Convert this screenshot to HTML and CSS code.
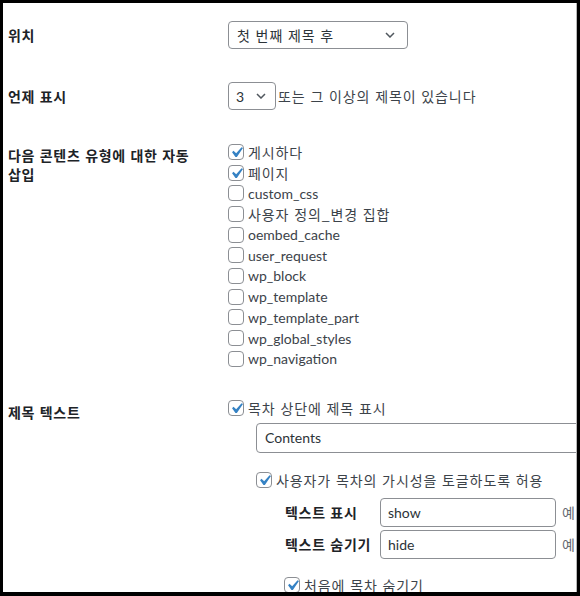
FILE: index.html
```html
<!DOCTYPE html>
<html lang="ko">
<head>
<meta charset="utf-8">
<link rel="stylesheet" href="styles.css">
</head>
<body>
<div class="frame">
  <div class="row row-pos">
    <div class="th th-mid">위치</div>
    <div class="td">
      <div class="select sel-wide"><span>첫 번째 제목 후</span><svg class="chev" viewBox="0 0 10 6" width="10" height="6"><path d="M1 1l4 4 4-4" fill="none" stroke="#50575e" stroke-width="1.5"/></svg></div>
    </div>
  </div>

  <div class="row row-when">
    <div class="th th-mid">언제 표시</div>
    <div class="td inline">
      <div class="select sel-num"><span class="en">3</span><svg class="chev" viewBox="0 0 10 6" width="10" height="6"><path d="M1 1l4 4 4-4" fill="none" stroke="#50575e" stroke-width="1.5"/></svg></div>
      <span class="after">또는 그 이상의 제목이 있습니다</span>
    </div>
  </div>

  <div class="row row-types">
    <div class="th th-top">다음 콘텐츠 유형에 대한 자동 삽입</div>
    <div class="td list">
      <div class="cb-line"><span class="cb on"><svg viewBox="0 0 20 20"><path d="M14.83 4.89l1.34.94-5.81 8.38H9.02L5.78 9.67l1.34-1.25 2.57 2.4z"/></svg></span>게시하다</div>
      <div class="cb-line"><span class="cb on"><svg viewBox="0 0 20 20"><path d="M14.83 4.89l1.34.94-5.81 8.38H9.02L5.78 9.67l1.34-1.25 2.57 2.4z"/></svg></span>페이지</div>
      <div class="cb-line"><span class="cb"></span><span class="en">custom_css</span></div>
      <div class="cb-line"><span class="cb"></span>사용자 정의_변경 집합</div>
      <div class="cb-line"><span class="cb"></span><span class="en">oembed_cache</span></div>
      <div class="cb-line"><span class="cb"></span><span class="en">user_request</span></div>
      <div class="cb-line"><span class="cb"></span><span class="en">wp_block</span></div>
      <div class="cb-line"><span class="cb"></span><span class="en">wp_template</span></div>
      <div class="cb-line"><span class="cb"></span><span class="en">wp_template_part</span></div>
      <div class="cb-line"><span class="cb"></span><span class="en">wp_global_styles</span></div>
      <div class="cb-line"><span class="cb"></span><span class="en">wp_navigation</span></div>
    </div>
  </div>

  <div class="row row-title">
    <div class="th th-title">제목 텍스트</div>
    <div class="td">
      <div class="cb-line"><span class="cb on"><svg viewBox="0 0 20 20"><path d="M14.83 4.89l1.34.94-5.81 8.38H9.02L5.78 9.67l1.34-1.25 2.57 2.4z"/></svg></span>목차 상단에 제목 표시</div>
      <div class="input input-long"><span class="en">Contents</span></div>
      <div class="cb-line toggle"><span class="cb on"><svg viewBox="0 0 20 20"><path d="M14.83 4.89l1.34.94-5.81 8.38H9.02L5.78 9.67l1.34-1.25 2.57 2.4z"/></svg></span>사용자가 목차의 가시성을 토글하도록 허용</div>
      <div class="subgrid">
        <div class="sub-label">텍스트 표시</div>
        <div class="input input-short"><span class="en">show</span></div>
        <div class="hint">예:</div>
        <div class="sub-label">텍스트 숨기기</div>
        <div class="input input-short"><span class="en">hide</span></div>
        <div class="hint">예:</div>
      </div>
      <div class="cb-line hidefirst"><span class="cb on"><svg viewBox="0 0 20 20"><path d="M14.83 4.89l1.34.94-5.81 8.38H9.02L5.78 9.67l1.34-1.25 2.57 2.4z"/></svg></span>처음에 목차 숨기기</div>
    </div>
  </div>
</div>
</body>
</html>
```

FILE: styles.css
```css
html, body {
  margin: 0;
  padding: 0;
  background: #000;
}
body {
  width: 580px;
  height: 596px;
  overflow: hidden;
  font-family: "Noto Sans CJK KR", "Noto Sans", sans-serif;
  font-size: 14px;
  letter-spacing: 0.9px;
  color: #2c3338;
}
.en {
  font-family: Lato, "Noto Sans", sans-serif;
  letter-spacing: 0;
}
.frame {
  margin: 3px 0 0 3px;
  width: 574px;
  height: 589px;
  box-sizing: border-box;
  background: #fff;
  border-right: 1px solid #b8b8b8;
  padding-left: 5px;
  overflow: hidden;
}
.row {
  display: grid;
  grid-template-columns: 220px 1fr;
}
.th {
  font-weight: 700;
  color: #1d2327;
  line-height: 19px;
  letter-spacing: 0.7px;
}
.th-mid { align-self: center; }
.th-top {
  padding-top: 4px;
  width: 190px;
}
.th-title { padding-top: 5px; }
.td { min-width: 0; }
.row-pos { margin-top: 18px; }
.row-when { margin-top: 33px; }
.row-types { margin-top: 31.5px; }
.row-title { margin-top: 28.5px; }

.inline {
  display: flex;
  align-items: center;
}
.select {
  display: flex;
  align-items: center;
  justify-content: space-between;
  height: 28px;
  box-sizing: border-box;
  border: 1px solid #8c8f94;
  border-radius: 4px;
  background: #fff;
  color: #2c3338;
}
.sel-wide {
  width: 180px;
  padding: 0 12px 0 8px;
}
.sel-num {
  width: 48px;
  padding: 0 9px 0 7px;
}
.after {
  margin-left: 2px;
  color: #3c434a;
}
.chev { display: block; }

.cb-line {
  display: flex;
  align-items: center;
  height: 20.7px;
  color: #3c434a;
  white-space: nowrap;
}
.cb {
  position: relative;
  flex: none;
  width: 16px;
  height: 16px;
  box-sizing: border-box;
  border: 1px solid #8c8f94;
  border-radius: 4px;
  background: #fff;
  margin-right: 4px;
}
.cb svg {
  position: absolute;
  left: -3px;
  top: -3px;
  width: 21px;
  height: 21px;
  fill: #3582c4;
}

.input {
  box-sizing: border-box;
  border: 1px solid #8c8f94;
  border-radius: 4px;
  background: #fff;
  display: flex;
  align-items: center;
  color: #2c3338;
}
.input-long {
  margin: 4.6px 0 0 28px;
  width: 420px;
  height: 30px;
  padding-left: 8px;
}
.toggle {
  margin: 16.6px 0 0 28px;
}
.subgrid {
  display: grid;
  grid-template-columns: 89px 176px max-content;
  column-gap: 6px;
  row-gap: 3px;
  align-items: center;
  margin: 7.7px 0 0 57px;
}
.sub-label {
  font-weight: 700;
  color: #1d2327;
  white-space: nowrap;
  letter-spacing: 0.7px;
}
.input-short {
  height: 29px;
  padding-left: 7px;
}
.hint {
  color: #646970;
  white-space: nowrap;
}
.hidefirst {
  margin: 15.6px 0 0 56px;
}
```
